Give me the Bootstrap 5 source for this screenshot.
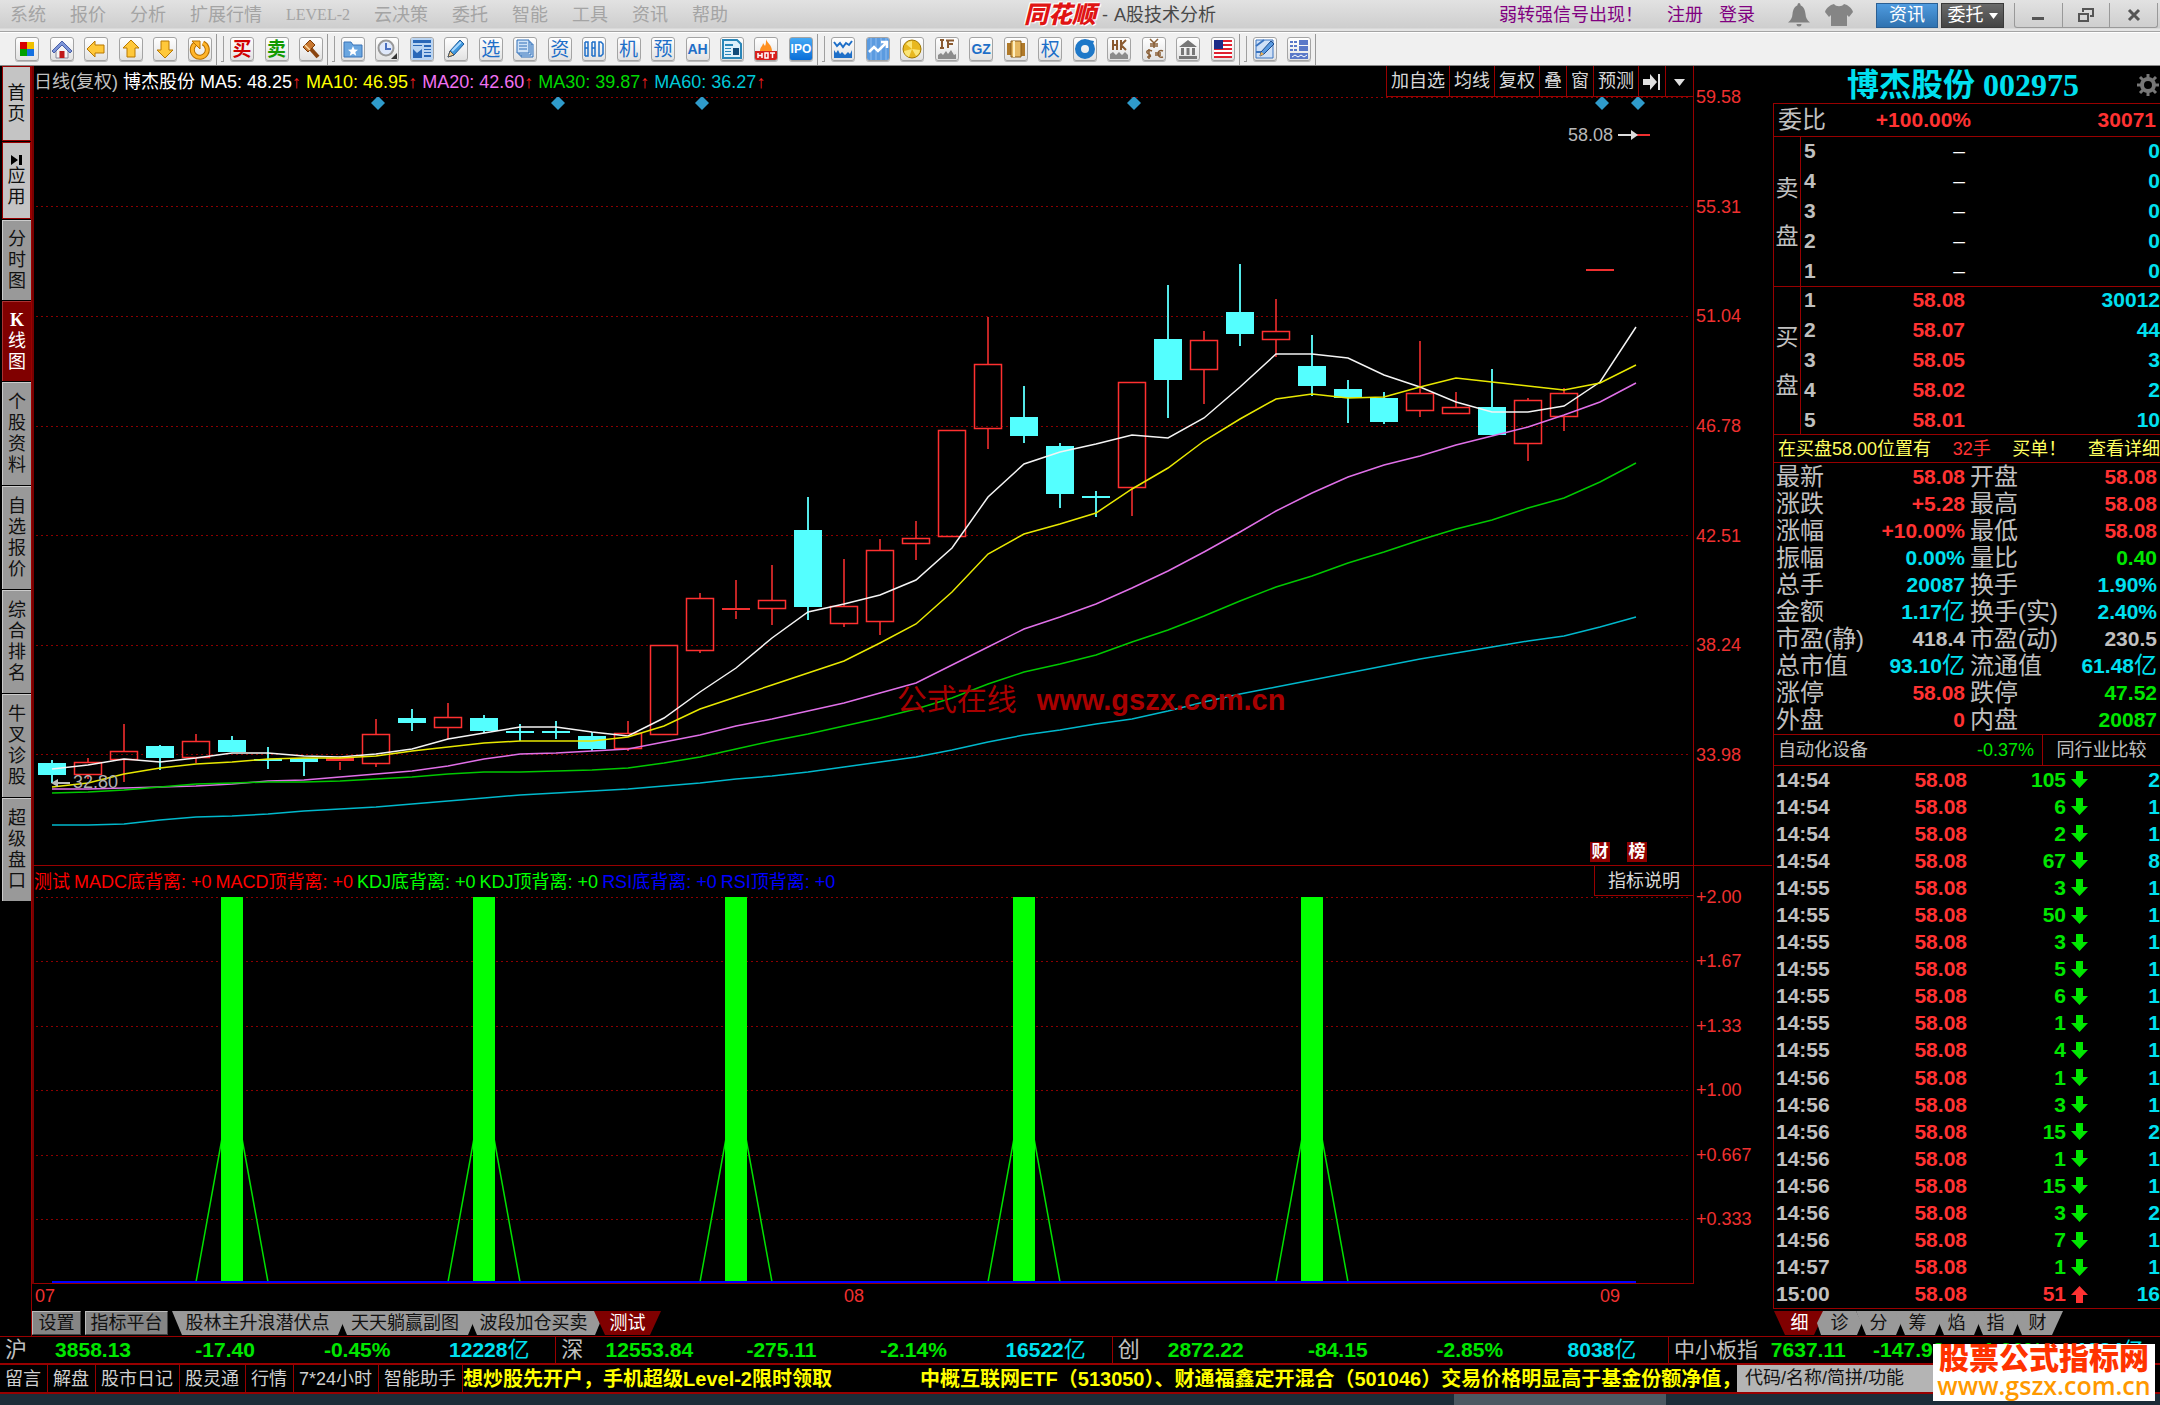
<!DOCTYPE html>
<html lang="zh-CN">
<head>
<meta charset="utf-8">
<meta name="viewport" content="width=device-width, initial-scale=1">
<title>同花顺 - A股技术分析</title>
<link href="https://cdn.jsdelivr.net/npm/bootstrap@5.3.0/dist/css/bootstrap.min.css" rel="stylesheet">
<style>
:root{--line:#980000;--up:#ff3232;--down:#00e600;--cy:#00e0f0;--gy:#c0c0c0}
html,body{height:100%}
body{background:#000;color:var(--gy);font-family:"Liberation Sans","Noto Sans CJK SC",sans-serif;font-size:18px;line-height:22px;overflow:hidden}
button,a{white-space:nowrap}
button{font:inherit;color:inherit;background:none;border:0;padding:0}
a{color:inherit;text-decoration:none}
.c-up{color:var(--up)}.c-dn{color:var(--down)}.c-cy{color:var(--cy)}.c-gy{color:var(--gy)}
.topbar{height:33px;background:linear-gradient(#e2e2e2,#cecece 28px,#e4e4e4 29px,#e4e4e4 31px,#a4a4a4 31px,#a4a4a4 32px,#fff 32px);color:#a4a4a4;padding-bottom:3px}
.menus{gap:24px;padding-left:10px;flex:1 1 0;text-shadow:1px 1px #f4f4f4}
.menus .latin{font-family:"Liberation Serif",serif;font-size:16px}
.brand-mark{color:#e01414;font-weight:900;font-style:italic;font-size:24px;text-shadow:0 0 2px #fff,0 0 2px #fff,1px 1px #fff,-1px -1px #fff}
.apptitle{color:#484848;gap:6px;margin-left:70px}
.toplinks{flex:1 1 0;color:#800080}
.btn-info2{width:62px;height:25px;margin-left:22px;color:#fff;background:linear-gradient(#4f9bdf,#2f72b0);border:1px solid #2a5f93}
.btn-deleg{width:63px;height:25px;margin-left:3px;color:#fff;background:linear-gradient(#6a6a6a,#444);border:1px solid #3a3a3a}
.winbtns{width:144px;height:25px;margin:0 2px 0 10px;border:1px solid #999;border-top:0;border-radius:0 0 3px 3px}
.winbtns button{flex:1 1 0;border-left:1px solid #999}
.winbtns button:first-child{border-left:0}
.winbtns svg{display:block;margin:auto}
.toolbar{height:33px;background:#f0f0f0;padding-left:15px;border-bottom:1px solid #888}
.tgroup{display:flex;justify-content:space-between}
.g1{width:197px}.g2{width:93px}.g3{width:472px}.g4{width:404px}.g5{width:58px}
.tsep{width:8px;height:31px;margin:0 6px 0 4px;border-left:1px solid #999;position:relative}
.tsep::after{content:"";width:3px;height:26px;margin:2px 0 0 4px;display:block;border:solid #a0a0a0;border-width:0 1px 1px 0}
.tsep:last-child::after{display:none}
.ti{width:24px;height:24px;border:1px solid #a4a4a4;border-radius:3px;background:linear-gradient(#fff,#e2e2e2);color:#1e6fc8;font-size:19px;line-height:21px;display:flex;align-items:center;justify-content:center;overflow:hidden;box-shadow:0 1px #bbb}
.ti svg{width:22px;height:22px;flex:none}
.ti.t-buy{color:#d00000;font-weight:700}.ti.t-sell{color:#129a00;font-weight:700}
.ti.t-sm{font-size:14px;font-weight:700}
.ti.t-ipo{background:linear-gradient(#45a9f5,#0a6fd8);color:#fff;font-size:12px;font-weight:700}
.sidenav{width:32px;border-right:1px solid var(--line);padding-left:2px}
.sidenav button{width:29px;display:flex;flex-direction:column;align-items:center;justify-content:center;background:#999;color:#111;line-height:21px;border-top:1px solid #ccc;border-left:1px solid #ccc;margin-bottom:1px;height:103px}
.sidenav .h-a{height:75px;background:#c4c4c4;border:1px solid var(--line)}
.sidenav .h-b{height:77px;background:#c4c4c4;border:1px solid var(--line)}
.sidenav .h-c{height:80px}
.sidenav .on{background:#800000;color:#fff;border-color:#a33;}
.kchar{font-family:"Liberation Serif",serif;font-weight:700}
.edge{border-left:2px solid #780000;border-right:1px solid var(--line)}
.axis{width:78px;color:#f03030;padding-left:2px}
.axis.a1{margin:-11px 0 99px}
.axis.a2{margin:-11px 0 54px}
.hd1{height:31px;gap:5px}
.hd1 i{font-style:normal;color:#ff2020}
.hdbtns{color:#d8d8d8;align-self:stretch}
.hdbtns button{border-left:1px solid var(--line);border-bottom:1px solid var(--line);padding:0 4px}
.hd2{height:32px;border-top:1px solid var(--line);gap:4px}
.ma10{color:#ff0}.ma20{color:#f070f0}.ma30{color:#00d800}.ma60{color:#00c8d8}
.k-red{color:#f00}.k-grn{color:#0f0}.k-blu{color:#00f}
.explain{width:99px;color:#d8d8d8;border-left:1px solid var(--line);border-bottom:1px solid var(--line);height:30px;align-self:flex-start}
.mainplot{flex:768 1 0;min-height:0}
.subplot{flex:387 1 0;min-height:0}
.plotbox{position:relative;min-width:0}
.plotbox svg{position:absolute;inset:0;width:100%;height:100%;display:block}
.pin{position:absolute;white-space:nowrap}
.p-low{left:39px;top:674px;color:#b0b0b0}
.p-high{right:80px;top:27px;color:#b8b8b8}
.p-cai,.p-bang{bottom:3px;width:20px;text-align:center;background:#900000;color:#fff;font-weight:700;font-size:17px;line-height:20px}
.p-cai{right:83px}.p-bang{right:46px}
.p-mark{left:52%;top:585px;color:#a80000;font-size:30px;line-height:36px}
.p-mark b{font-size:29px;margin-left:20px}
.months{height:27px;color:#f03030;position:relative}
.m7{left:3px;top:1px}.m8{left:812px;top:1px}.m9{left:1568px;top:1px}
.tabs{height:25px;color:#111}
.tabs button{height:24px;background:#999}
.tabs .bx{border:1px solid #bbb;border-right-color:#444;border-bottom-color:#444;background:#858585}
.tabs .slant{clip-path:polygon(0 0,calc(100% - 5px) 0,100% 50%,calc(100% - 5px) 100%,10px 100%);margin-right:-6px}
.tabs .dot{clip-path:polygon(6px 0,calc(100% - 6px) 0,100% 50%,calc(100% - 5px) 100%,4px 100%,0 50%);margin-left:-8px;margin-right:-6px}
.tabs .last{clip-path:polygon(0 0,100% 0,calc(100% - 11px) 100%,10px 100%)}
.tabs .now{background:#800000;color:#fff;clip-path:polygon(0 0,100% 0,calc(100% - 11px) 100%,11px 100%)}
.qtabs{padding-left:2px;margin-top:2px}
.w-49{width:49px}.w-83{width:83px}.w-171{width:171px}.w-136{width:136px}.w-133{width:133px}.w-67{width:67px}.w-51{width:51px}.w-45{width:45px}
.quote{width:388px}
.qtitle{height:37px;color:var(--cy);font-family:"Liberation Serif","Noto Sans CJK SC",serif;font-size:32px;line-height:36px;font-weight:700}
.qname{padding-left:18px}
.qbody{border-left:1px solid var(--line);border-top:1px solid var(--line);margin-left:1px;min-height:0}
.num{font-size:21px;font-weight:700}
.lab{font-size:24px}
.weibi{height:33px;border-bottom:1px solid var(--line)}
.weibi .pr{width:145px;text-align:right}
.book{border-bottom:1px solid var(--line)}
.book .side{width:27px;border-right:1px solid var(--line);font-size:23px;line-height:48px}
.brow{height:30px;display:flex;align-items:center}
.sells{margin:-1px 0 0}
.buys{margin:-2px 0 -1px}
.brow .lv{width:20px;padding-left:3px}
.brow .pr{width:144px;text-align:right}
.hint{height:28px;border-bottom:1px solid var(--line);color:#ffff60}
.stats{display:grid;grid-template-columns:1fr 1fr;padding:0 2px 0 2px;grid-auto-rows:27px}
.stats>div{display:flex;justify-content:space-between;align-items:center;padding-right:2px}
.stats>div:nth-child(even){padding-left:3px;padding-right:1px}
.stats .yi{font-weight:400;font-size:23px}
.sector{height:32px;border-top:1px solid var(--line);border-bottom:1px solid var(--line);margin-top:1px}
.sector a{width:118px;border-left:1px solid var(--line);align-self:stretch}
.ticks{flex:1 1 0;display:flex;border-bottom:1px solid var(--line)}
.ticks table{width:100%;border-collapse:collapse;table-layout:fixed}
.ticks td{padding:0;vertical-align:middle;text-align:right}
.ticks td:first-child{text-align:left;padding-left:2px;width:90px;color:var(--gy)}
.ticks td:nth-child(2){width:103px}.ticks td:nth-child(3){width:99px}.ticks td:nth-child(4){width:22px}
.ticks svg{display:block;margin-left:5px}
.indices{height:29px;border-top:1px solid var(--line);border-bottom:2px solid var(--line)}
.idx{flex:556 1 0;border-right:1px solid var(--line);padding-left:5px;min-width:0;display:flex;align-items:center}
.idx.tail{flex:491 1 0;border:0}
.idx b{flex:1 1 0;text-align:center;font-size:21px}
.idx em{font-style:normal;font-size:22px}
.idx b em{font-weight:400}
.idx.tail em{font-size:21px}
.newsbar{height:29px;border-bottom:2px solid var(--line);color:#d0d0d0}
.newsbar button{border-right:1px solid var(--line);padding:0 6px 0 5px}
.news{color:#ff0;font-size:20px;font-weight:700}
.news .n2{margin-left:88px}
.newsbar input{width:200px;border:0;border-radius:0;background:#b4b4b4;color:#111;padding:0 8px;margin-right:223px;height:27px}
.newsbar input::placeholder{color:#111;opacity:1}
.strip{height:11px;background:#1c2c38}
.strip div{height:11px;width:212px;margin-left:1454px;background:#4c5962}
.sitebadge{position:absolute;right:5px;bottom:4px;width:222px;height:57px;background:#fff;text-align:center}
.sitebadge strong{display:block;color:#ff3300;font-size:30px;line-height:30px;font-weight:900}
.sitebadge span{display:block;color:#ff9900;font-family:"Open Sans","Noto Sans",sans-serif;font-weight:600;font-size:25px;line-height:22px}
</style>
</head>
<body class="d-flex flex-column">
<header class="topbar d-flex align-items-center">
  <nav class="menus d-flex align-items-center">
    <button>系统</button><button>报价</button><button>分析</button><button>扩展行情</button><button class="latin">LEVEL-2</button><button>云决策</button><button>委托</button><button>智能</button><button>工具</button><button>资讯</button><button>帮助</button>
  </nav>
  <div class="apptitle d-flex align-items-center"><span class="brand-mark">同花顺</span><span>-</span><span>A股技术分析</span></div>
  <div class="toplinks d-flex align-items-center justify-content-end">
    <a href="#" class="me-4">弱转强信号出现！</a><a href="#" class="me-3">注册</a><a href="#">登录</a>
    <svg width="24" height="26" viewBox="0 0 24 26" fill="#808080" style="margin-left:32px"><path d="M12 1c1 0 1.500 1 1.500 2.200C17 5 18 8 18.500 12c.3 4 1.500 6 4.500 8.500H1C4 18 5.200 16 5.500 12 6 8 7 5 10.500 3.200 10.500 2 11 1 12 1zM9.500 22h5a2.500 2.500 0 0 1-5 0z"/></svg>
    <svg width="30" height="24" viewBox="0 0 30 24" fill="#858585" style="margin-left:13px"><path d="M10 1c2 3 8 3 10 0 4 1 8 4 9 8l-4 5-2-2v11H7V12l-2 2-4-5c1-4 5-7 9-8z"/></svg>
    <button class="btn-info2">资讯</button><button class="btn-deleg">委托 <svg width="9" height="6"><path d="M0 0h9L4.500 6z" fill="#fff"/></svg></button>
    <div class="winbtns d-flex">
      <button aria-label="最小化"><svg width="16" height="16"><path d="M2 10h12v3H2z" fill="#555"/></svg></button>
      <button aria-label="还原"><svg width="18" height="16" fill="none" stroke="#555" stroke-width="2"><path d="M2 7h9v7H2zM6 5V2h10v7h-3"/></svg></button>
      <button aria-label="关闭"><svg width="16" height="16" stroke="#555" stroke-width="3"><path d="M3 3l10 10M13 3L3 13"/></svg></button>
    </div>
  </div>
</header>

<div class="toolbar d-flex align-items-center">
  <div class="tgroup g1">
    <button class="ti" aria-label="面板"><svg viewBox="0 0 22 22"><path fill="#d80000" d="M4 4h7v7H4z"/><path fill="#f0c000" d="M11 4h7v7h-7z"/><path fill="#00a000" d="M4 11h7v7H4z"/><path fill="#1470e0" d="M11 11h7v7h-7z"/></svg></button>
    <button class="ti" aria-label="首页"><svg viewBox="0 0 22 22"><path fill="#f4f4f4" stroke="#889" d="M5 11l6-6 6 6v9H5z"/><path d="M1 13L11 3l10 10-2 2-8-8-8 8z" fill="#7d95d8" stroke="#4a60a8"/><path fill="#c01818" d="M8.500 13h5v7h-5z"/></svg></button>
    <button class="ti" aria-label="后退"><svg viewBox="0 0 22 22"><path d="M2 11l8-8v4h9v8h-9v4z" fill="#ffc83a" stroke="#b87800"/></svg></button>
    <button class="ti" aria-label="上"><svg viewBox="0 0 22 22"><path d="M11 2l8 8h-4v9H7v-9H3z" fill="#ffc83a" stroke="#b87800"/></svg></button>
    <button class="ti" aria-label="下"><svg viewBox="0 0 22 22"><path d="M11 20l8-8h-4V3H7v9H3z" fill="#ffc83a" stroke="#b87800"/></svg></button>
    <button class="ti" aria-label="刷新"><svg viewBox="0 0 22 22" fill="none"><path d="M14 5a7.500 7.500 0 1 1-8 1" stroke="#b87000" stroke-width="5"/><path d="M14 5a7.500 7.500 0 1 1-8 1" stroke="#ffb52a" stroke-width="3"/><path d="M3 3h8v8z" fill="#ffb52a" stroke="#b87000"/></svg></button>
  </div><div class="tsep"></div>
  <div class="tgroup g2">
    <button class="ti t-buy">买</button><button class="ti t-sell">卖</button>
    <button class="ti" aria-label="委托"><svg viewBox="0 0 22 22"><path d="M10 10l8 9" stroke="#8a4510" stroke-width="4"/><path d="M3 9l7-7 5 5-7 7z" fill="#c87830" stroke="#7a3a08"/><path d="M5 7l5 5" stroke="#ffd9a0" stroke-width="1.500"/></svg></button>
  </div><div class="tsep"></div>
  <div class="tgroup g3">
    <button class="ti" aria-label="收藏"><svg viewBox="0 0 22 22"><path d="M2 4h7l2 3h9v12H2z" fill="#6aa6e0" stroke="#3a74b8"/><path fill="#fff" d="M11 8l1.500 3.500 3.500.3-2.700 2.300.9 3.600L11 15.800l-3.200 1.900.9-3.600L6 11.800l3.500-.3z"/></svg></button>
    <button class="ti" aria-label="时间"><svg viewBox="0 0 22 22"><circle cx="10" cy="10" r="7.500" fill="#dfe8fa" stroke="#999" stroke-width="2"/><path d="M10 5v6h5" stroke="#4a70c0" stroke-width="2" fill="none"/><path fill="#333" d="M21 15v6h-6z"/></svg></button>
    <button class="ti" aria-label="版面"><svg viewBox="0 0 22 22"><path fill="#b9d4f2" d="M0 0h22v22H0z"/><path fill="#2a68b8" d="M2 2h18v3H2zM2 7h9v1H2zM13 7h7v2h-7zM13 11h7v1h-7zM13 14h7v1h-7zM13 17h7v2h-7zM2 11l4 4 5-4v9H2z"/></svg></button>
    <button class="ti" aria-label="画线"><svg viewBox="0 0 22 22"><path d="M3 19l2-6L15 2l4 4L9 17z" fill="#3f97dd" stroke="#1d5c9c"/><path d="M7 13l9-9" stroke="#a8d8ff" stroke-width="2"/><path d="M3 19l2-6 4 4z" fill="#f4d090" stroke="#555"/></svg></button>
    <button class="ti">选</button>
    <button class="ti" aria-label="报告"><svg viewBox="0 0 22 22" fill="#cfe2f6" stroke="#2f6fb8"><path d="M7 6h12v13H7z"/><path d="M5 4h12v13H5z"/><path d="M3 2h12v13H3z"/><path d="M5 5h8M5 8h8M5 11h8"/></svg></button>
    <button class="ti">资</button><button class="ti t-sm" aria-label="BBD"><svg viewBox="0 0 22 22" fill="none" stroke="#1e6fc8" stroke-width="1.500"><path d="M2 4v14M2 4h3v6H2M2 10h3v8H2M9 4v14M9 4h3v6H9M9 10h3v8H9M16 4v14h2l2-2V6l-2-2z"/></svg></button><button class="ti">机</button><button class="ti">预</button><button class="ti t-sm">AH</button>
    <button class="ti" aria-label="公告"><svg viewBox="0 0 22 22"><path fill="#dff0fa" stroke="#2a86b8" stroke-width="2" d="M2 2h14l4 4v14H2z"/><path fill="#2a86b8" d="M4 6h8v2H4zM4 10h6v1H4zM4 13h6v1H4zM4 16h6v1H4z"/><path fill="#124a78" d="M12 10h6v7h-6z"/></svg></button>
    <button class="ti" aria-label="热点"><svg viewBox="0 0 22 22"><path d="M11 1c1 4 6 6 6 12H5c0-4 3-5 3-8l2 3c1-2 1-4 1-7z" fill="#ff9020"/><path fill="#d8201c" d="M0 13h22v9H0z"/><path d="M3 15v5M7 15v5M3 17.500h4M10 15h3v5h-3zM15 15h5M17.500 15v5" stroke="#fff" stroke-width="1.500" fill="none"/></svg></button>
    <button class="ti t-ipo">IPO</button>
  </div><div class="tsep"></div>
  <div class="tgroup g4">
    <button class="ti" aria-label="走势"><svg viewBox="0 0 22 22"><path d="M2 4l3 4 3-3 3 4 3-4 3 2 3-4" stroke="#1e6fc8" stroke-width="2" fill="none"/><path fill="#1e6fc8" d="M2 20v-8l2 3 2-3 2 4 2-2 3 3 3-3 2 2 2-4v8z"/></svg></button>
    <button class="ti" aria-label="K线"><svg viewBox="0 0 22 22"><path fill="#5b9be0" d="M0 0h22v22H0z"/><path d="M4 0v22M9 0v22M14 0v22M19 0v22" stroke="#8fbcf0"/><path d="M2 14l5-5 4 4 8-8M14 4h6v6" stroke="#fff" stroke-width="2.500" fill="none"/></svg></button>
    <button class="ti" aria-label="基金"><svg viewBox="0 0 22 22"><circle cx="11" cy="11" r="9" fill="#e8b820" stroke="#a07800"/><path d="M11 11L5 6a8 8 0 0 1 6-3zM11 11l8 1a8 8 0 0 1-4 6zM11 11l-3 8a8 8 0 0 1-5-6z" fill="#fbe678"/></svg></button>
    <button class="ti" aria-label="期指"><svg viewBox="0 0 22 22"><path d="M6 2v8M4 2h4M4 10h4M12 2v8M10 2.500h8M12 6h5" stroke="#8a5a30" stroke-width="2"/><path fill="#8c8c8c" d="M2 21v-4l3-2 2 2 3-4 2 3 3-4 3 5 2-1v5z"/></svg></button>
    <button class="ti t-sm">GZ</button>
    <button class="ti" aria-label="商品"><svg viewBox="0 0 22 22"><path fill="#b07a2a" d="M2 5h6v12H2zM12 5h8v13h-8z"/><path fill="#e6b862" stroke="#8a5c18" d="M6 3h10v16H6z"/><path d="M9 3v16" stroke="#fff0c0" stroke-width="2"/></svg></button>
    <button class="ti">权</button>
    <button class="ti" aria-label="股转"><svg viewBox="0 0 22 22"><circle cx="11" cy="11" r="7" fill="none" stroke="#1e78c8" stroke-width="6"/><path d="M14 2l6 1-2 6z" fill="#1e78c8"/></svg></button>
    <button class="ti" aria-label="港股"><svg viewBox="0 0 22 22"><path d="M5 2v10M9 2v10M5 7h4M13 2v10M18 2l-5 5 5 5" stroke="#8a5a30" stroke-width="2" fill="none"/><path fill="#8c8c8c" d="M2 21v-5l3-2 3 3 3-3 3 3 3-3 3 3v4z"/></svg></button>
    <button class="ti" aria-label="外汇"><svg viewBox="0 0 22 22" fill="none" stroke="#8a6038" stroke-width="1.500"><path d="M7 1l4 4 4-4M11 5v5M7 6h8M7 8h8M9 13c-4-2-7 1-4 2.500s4 4-1 3.500M6 11v10M20 13c-6-3-7 8 0 6M12 15h6M12 17h6"/></svg></button>
    <button class="ti" aria-label="银行"><svg viewBox="0 0 22 22"><path fill="#777" d="M11 2l9 7H2zM4 10h3v7H4zM9.500 10h3v7h-3zM15 10h3v7h-3zM2 18h18v3H2z"/></svg></button>
    <button class="ti" aria-label="美股"><svg viewBox="0 0 22 22"><path fill="#fff" d="M2 2h18v18H2z"/><path d="M2 3h18M2 7h18M2 11h18M2 15h18M2 19h18" stroke="#e02030" stroke-width="2"/><path fill="#1c2c88" d="M2 2h9v9H2z"/></svg></button>
  </div><div class="tsep"></div>
  <div class="tgroup g5">
    <button class="ti" aria-label="编辑"><svg viewBox="0 0 22 22"><path fill="#cfe0f6" stroke="#3a74c0" d="M2 2h17v18H2z"/><path d="M2 8l8-6M2 14h6" stroke="#3a74c0" stroke-width="2"/><path d="M6 18l1-4L17 3l3 3L10 16z" fill="#5a9ae0" stroke="#1d4c8c"/><path d="M6 18l1-4 3 2z" fill="#f0b050"/></svg></button>
    <button class="ti" aria-label="布局"><svg viewBox="0 0 22 22"><path fill="#5a78c8" d="M2 3h3v2H2zM2 7h3v2H2zM2 11h3v2H2zM6 3h3v2H6zM6 7h3v2H6zM6 11h3v2H6zM11 2h9v5h-9zM11 8h9v5h-9zM2 15h18v6H2z"/><path d="M4 19l3-2 3 2 3-2 3 2 3-2" stroke="#fff" fill="none"/></svg></button>
  </div><div class="tsep"></div>
</div>

<main class="d-flex flex-fill" style="min-height:0">
  <nav class="sidenav d-flex flex-column">
    <button class="h-a"><span>首</span><span>页</span></button>
    <button class="h-b"><svg width="14" height="12"><path d="M1 1l7 5-7 5zM9 1h3v10H9z"/></svg><span>应</span><span>用</span></button>
    <button class="h-c"><span>分</span><span>时</span><span>图</span></button>
    <button class="h-c on"><span class="kchar">K</span><span>线</span><span>图</span></button>
    <button><span>个</span><span>股</span><span>资</span><span>料</span></button>
    <button><span>自</span><span>选</span><span>报</span><span>价</span></button>
    <button><span>综</span><span>合</span><span>排</span><span>名</span></button>
    <button><span>牛</span><span>叉</span><span>诊</span><span>股</span></button>
    <button><span>超</span><span>级</span><span>盘</span><span>口</span></button>
  </nav>

  <section class="d-flex flex-column flex-fill" style="min-width:0">
    <div class="d-flex">
      <div class="hd1 edge flex-fill d-flex align-items-center">
        <span>日线(复权)</span><span class="text-white">博杰股份</span>
        <span class="text-white">MA5: 48.25<i>↑</i></span><span class="ma10">MA10: 46.95<i>↑</i></span><span class="ma20">MA20: 42.60<i>↑</i></span><span class="ma30">MA30: 39.87<i>↑</i></span><span class="ma60">MA60: 36.27<i>↑</i></span>
        <div class="hdbtns d-flex ms-auto">
          <button>加自选</button><button>均线</button><button>复权</button><button>叠</button><button>窗</button><button>预测</button>
          <button aria-label="到最后"><svg width="18" height="18" fill="#e0e0e0"><path d="M0 6h7V1l7 8-7 8v-5H0zM15 1h2v16h-2z"/></svg></button>
          <button aria-label="更多" class="px-2"><svg width="11" height="7"><path d="M0 0h11L5.500 7z" fill="#e0e0e0"/></svg></button>
        </div>
      </div>
      <div class="axis"></div>
    </div>
    <div class="mainplot d-flex">
      <div class="plotbox edge flex-fill">
        <svg id="kline" viewBox="34 97 1659 768" preserveAspectRatio="none"></svg>
        <span class="pin p-low">32.80</span><span class="pin p-high">58.08</span>
        <span class="pin p-cai">财</span><span class="pin p-bang">榜</span>
        <span class="pin p-mark">公式在线<b>www.gszx.com.cn</b></span>
      </div>
      <div class="axis a1 d-flex flex-column justify-content-between"><span>59.58</span><span>55.31</span><span>51.04</span><span>46.78</span><span>42.51</span><span>38.24</span><span>33.98</span></div>
    </div>
    <div class="d-flex">
      <div class="hd2 edge flex-fill d-flex align-items-center">
        <span class="k-red">测试</span><span class="k-red">MADC底背离: +0</span><span class="k-red">MACD顶背离: +0</span><span class="k-grn">KDJ底背离: +0</span><span class="k-grn">KDJ顶背离: +0</span><span class="k-blu">RSI底背离: +0</span><span class="k-blu">RSI顶背离: +0</span>
        <button class="explain ms-auto">指标说明</button>
      </div>
      <div class="axis" style="border-top:1px solid var(--line)"></div>
    </div>
    <div class="subplot d-flex">
      <div class="plotbox edge flex-fill">
        <svg id="subline" viewBox="34 897 1659 387" preserveAspectRatio="none"></svg>
      </div>
      <div class="axis a2 d-flex flex-column justify-content-between"><span>+2.00</span><span>+1.67</span><span>+1.33</span><span>+1.00</span><span>+0.667</span><span>+0.333</span></div>
    </div>
    <div class="months"><span class="pin m7">07</span><span class="pin m8">08</span><span class="pin m9">09</span></div>
    <div class="tabs d-flex">
      <button class="bx w-49 me-1">设置</button><button class="bx w-83 me-1">指标平台</button>
      <button class="slant w-171">股林主升浪潜伏点</button><button class="slant w-136">天天躺赢副图</button><button class="slant w-133">波段加仓买卖</button><button class="now w-67">测试</button>
    </div>
  </section>

  <aside class="quote d-flex flex-column">
    <div class="qtitle d-flex align-items-center">
      <span class="qname flex-fill text-center">博杰股份 002975</span>
      <svg width="24" height="24" viewBox="0 0 24 24"><circle cx="12" cy="12" r="6" fill="none" stroke="#777" stroke-width="4"/><path d="M12 1v5M12 18v5M1 12h5M18 12h5M4 4l4 4M16 16l4 4M20 4l-4 4M8 16l-4 4" stroke="#777" stroke-width="3"/></svg>
    </div>
    <div class="qbody d-flex flex-column flex-fill">
      <div class="weibi d-flex align-items-center num c-up"><span class="lab fw-normal c-gy ps-1">委比</span><span class="pr">+100.00%</span><span class="ms-auto pe-1">30071</span></div>
      <div class="book d-flex"><div class="side d-flex flex-column align-items-center justify-content-center"><span>卖</span><span>盘</span></div><div class="flex-fill sells" id="sells"></div></div>
      <div class="book d-flex"><div class="side d-flex flex-column align-items-center justify-content-center"><span>买</span><span>盘</span></div><div class="flex-fill buys" id="buys"></div></div>
      <div class="hint d-flex align-items-center justify-content-between"><span class="ps-1">在买盘58.00位置有</span><span class="c-up">32手</span><span>买单！</span><span>查看详细</span></div>
      <div class="stats" id="stats"></div>
      <div class="sector d-flex align-items-center"><span class="ps-1">自动化设备</span><span class="c-dn ms-auto pe-2 fs-6s">-0.37%</span><a href="#" class="d-flex align-items-center justify-content-center">同行业比较</a></div>
      <div class="ticks num"><table><tbody id="ticks"></tbody></table></div>
    </div>
    <div class="tabs qtabs d-flex">
      <button class="now w-51">细</button><button class="dot w-45">诊</button><button class="slant w-45">分</button><button class="slant w-45">筹</button><button class="slant w-45">焰</button><button class="slant w-45">指</button><button class="last w-51">财</button>
    </div>
  </aside>
</main>

<div class="indices d-flex">
  <div class="idx"><em>沪</em><b class="c-dn">3858.13</b><b class="c-dn">-17.40</b><b class="c-dn">-0.45%</b><b class="c-cy">12228<em>亿</em></b></div>
  <div class="idx"><em>深</em><b class="c-dn">12553.84</b><b class="c-dn">-275.11</b><b class="c-dn">-2.14%</b><b class="c-cy">16522<em>亿</em></b></div>
  <div class="idx"><em>创</em><b class="c-dn">2872.22</b><b class="c-dn">-84.15</b><b class="c-dn">-2.85%</b><b class="c-cy">8038<em>亿</em></b></div>
  <div class="idx tail"><em>中小板指</em><b class="c-dn">7637.11</b><b class="c-dn">-147.93</b><b class="c-dn">-1.90%</b><b class="c-cy">1234<em>亿</em></b></div>
</div>
<div class="newsbar d-flex">
  <button>留言</button><button>解盘</button><button>股市日记</button><button>股灵通</button><button>行情</button><button>7*24小时</button><button>智能助手</button>
  <div class="news flex-fill d-flex align-items-center text-nowrap overflow-hidden" style="min-width:0"><span>想炒股先开户，手机超级Level-2限时领取</span><span class="n2">中概互联网ETF（513050）、财通福鑫定开混合（501046）交易价格明显高于基金份额净值，</span></div>
  <input type="text" placeholder="代码/名称/简拼/功能" aria-label="代码/名称/简拼/功能">
</div>
<div class="strip"><div></div></div>
<div class="sitebadge"><strong>股票公式指标网</strong><span>www.gszx.com.cn</span></div>

<script>
// Candles: [kind, body top, body bottom, high, low]; r = rising, c = falling
const K=[['c',763,775,760,783],['r',762,775,758,779],['r',751,760,724,782],['c',746,758,745,770],['r',741,758,734,763],['c',740,752,736,752],['c',759,760,747,769],['c',758,762,758,776],['r',759,762,756,770],['r',734,764,719,767],['c',718,723,709,731],['r',717,728,703,739],['c',718,731,715,733],['c',731,732,724,741],['c',731,732,721,739],['c',736,749,732,751],['r',733,749,721,751],['r',645,735,645,735],['r',598,651,593,653],['r',609,611,580,619],['r',600,609,565,625],['c',530,607,497,620],['r',606,624,559,627],['r',550,622,539,635],['r',538,544,521,560],['r',430,537,430,537],['r',364,429,317,449],['c',417,436,386,443],['c',446,494,443,508],['c',496,497,491,517],['r',382,488,382,516],['c',339,380,285,418],['r',340,370,331,404],['c',312,334,264,346],['r',331,340,299,357],['c',366,386,335,396],['c',389,398,380,423],['c',398,422,392,424],['r',393,411,341,417],['r',407,414,392,414],['c',407,435,369,435],['r',400,444,398,461],['r',393,417,388,431],['r',270,270,270,270],['r',135,135,135,135]];
const X=i=>52+36*i;
const MA=[
 ['#f4f4f4',[769,765,759,762,758,753,753,756,757,754,749,739,733,727,727,732,736,718,692,668,638,612,604,595,580,548,497,464,452,444,435,438,418,387,354,354,358,375,387,402,412,412,406,382,327]],
 ['#e8e800',[787,783,774,768,764,762,759,758,758,756,751,747,743,741,741,741,737,726,709,697,685,673,661,643,624,592,554,534,524,513,489,468,441,419,399,394,398,397,387,378,382,386,390,383,365]],
 ['#e070e8',[789,789,788,787,786,784,781,780,777,774,771,766,759,754,753,751,749,742,735,726,719,711,703,693,683,665,647,629,617,604,588,571,552,532,511,493,477,465,456,445,436,427,415,402,383]],
 ['#00c800',[793,792,790,787,784,783,782,782,781,779,777,774,772,772,771,770,768,763,757,749,741,734,726,718,709,698,684,672,664,655,642,630,616,601,587,576,563,552,540,529,520,508,498,482,463]],
 ['#00b8cc',[825,825,824,820,817,816,814,811,809,807,804,801,798,795,793,791,789,786,783,779,776,772,767,762,757,750,742,735,730,724,719,711,702,694,687,680,673,666,659,653,647,641,636,627,617]]];
const grid=ys=>ys.map(y=>`<path d="M36 ${y}.5H1690" stroke="#8c0000" stroke-dasharray="2 3"/>`).join('');
let s=grid([97,206,316,426,535,645,754]);
K.forEach(([k,t,b,h,l],i)=>{const x=X(i);
  if(k==='c'){s+=`<path d="M${x} ${h}V${l}" stroke="#54e8e8" stroke-width="2"/><rect x="${x-14}" y="${t}" width="28" height="${Math.max(b-t,2)}" fill="#54ffff"/>`}
  else{s+=`<path d="M${x} ${h}V${t}M${x} ${b}V${l}" stroke="#ff3030" stroke-width="1.5"/>`;
    s+=b-t<4?`<rect x="${x-14}" y="${t-1}" width="28" height="${Math.max(b-t,2)}" fill="#f03030"/>`:`<rect x="${x-13.5}" y="${t+.5}" width="27" height="${b-t-1}" fill="none" stroke="#ff3030" stroke-width="1.5"/>`}});
MA.forEach(([c,v])=>s+=`<polyline points="${v.map((y,i)=>X(i)+','+y).join(' ')}" fill="none" stroke="${c}" stroke-width="1.5"/>`);
[378,558,702,1134,1602,1638].forEach(x=>s+=`<path d="M${x-7} 103l7-7 7 7-7 7z" fill="#2f9bcb"/>`);
s+='<path d="M1618 135h18" stroke="#ddd" stroke-width="2"/><path d="M1631 130l7 5-7 5z" fill="#ddd"/><path d="M1638 135h12" stroke="#f03030" stroke-width="2"/><path d="M54 783h16" stroke="#bbb" stroke-width="2"/><path d="M51 783l7-4v8z" fill="#bbb"/>';
kline.innerHTML=s;
s=grid([897,961,1026,1090,1155,1219]);
[5,12,19,27,35].forEach(i=>{const x=X(i);s+=`<path d="M${x-36} 1282L${x} 1083L${x+36} 1282" fill="none" stroke="#00e000" stroke-width="1.5"/><rect x="${x-11}" y="897" width="22" height="385" fill="#0f0"/>`});
s+='<path d="M34 1283.500H1693" stroke="#980000"/><path d="M52 1282H1636" stroke="#00f" stroke-width="2"/>';
subline.innerHTML=s;

const brow=([n,p,v],c)=>`<div class="brow num"><span class="lv">${n}</span><span class="pr ${c}">${p}</span><span class="ms-auto c-cy">${v}</span></div>`;
sells.innerHTML=[5,4,3,2,1].map(n=>brow([n,'–',0],'text-white fw-normal')).join('');
buys.innerHTML=[[1,'58.08',30012],[2,'58.07',44],[3,'58.05',3],[4,'58.02',2],[5,'58.01',10]].map(r=>brow(r,'c-up')).join('');
stats.innerHTML=[['最新','58.08','up'],['开盘','58.08','up'],['涨跌','+5.28','up'],['最高','58.08','up'],['涨幅','+10.00%','up'],['最低','58.08','up'],['振幅','0.00%','cy'],['量比','0.40','dn'],['总手','20087','cy'],['换手','1.90%','cy'],['金额','1.17亿','cy'],['换手(实)','2.40%','cy'],['市盈(静)','418.4','gy'],['市盈(动)','230.5','gy'],['总市值','93.10亿','cy'],['流通值','61.48亿','cy'],['涨停','58.08','up'],['跌停','47.52','dn'],['外盘','0','up'],['内盘','20087','dn']]
 .map(([l,v,c])=>`<div><span class="lab">${l}</span><span class="num c-${c}">${v.replace('亿','<span class="yi">亿</span>')}</span></div>`).join('');
ticks.innerHTML=[['14:54',105,2],['14:54',6,1],['14:54',2,1],['14:54',67,8],['14:55',3,1],['14:55',50,1],['14:55',3,1],['14:55',5,1],['14:55',6,1],['14:55',1,1],['14:55',4,1],['14:56',1,1],['14:56',3,1],['14:56',15,2],['14:56',1,1],['14:56',15,1],['14:56',3,2],['14:56',7,1],['14:57',1,1],['15:00',51,16]]
 .map(([t,v,n])=>{const u=t==='15:00';return `<tr><td>${t}</td><td class="c-up">58.08</td><td class="${u?'c-up':'c-dn'}">${v}</td><td><svg width="17" height="17"><path d="${u?'M8.500 0l8.500 9h-5v8H5V9H0z':'M8.500 17L17 8h-5V0H5v8H0z'}" fill="${u?'#ff3232':'#00e600'}"/></svg></td><td class="c-cy">${n}</td></tr>`}).join('');
</script>
<script src="https://cdn.jsdelivr.net/npm/bootstrap@5.3.0/dist/js/bootstrap.bundle.min.js"></script>
</body>
</html>
